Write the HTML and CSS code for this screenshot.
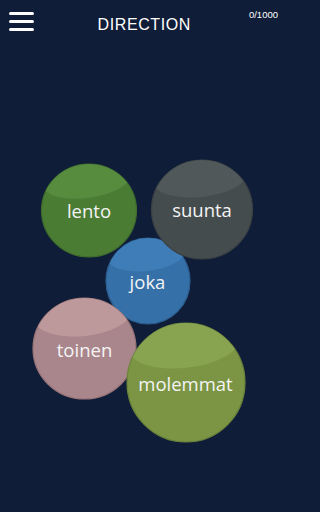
FILE: index.html
```html
<!DOCTYPE html>
<html>
<head>
<meta charset="utf-8">
<link rel="stylesheet" href="styles.css">
</head>
<body>
<div class="app">
  <header class="topbar">
    <div class="menu" aria-label="menu">
      <span class="bar"></span><span class="bar"></span><span class="bar"></span>
    </div>
    <h1 class="title">DIRECTION</h1>
    <div class="counter">0/1000</div>
  </header>
  <main class="stage">
    <svg class="bubbles" viewBox="0 48 288 464" width="288" height="464">
      <defs>
        <clipPath id="c-lento"><ellipse cx="89" cy="210.5" rx="47.5" ry="46.5"/></clipPath>
        <clipPath id="c-joka"><ellipse cx="148" cy="281" rx="42" ry="43"/></clipPath>
        <clipPath id="c-suunta"><ellipse cx="202" cy="209.5" rx="50.5" ry="49.5"/></clipPath>
        <clipPath id="c-toinen"><ellipse cx="84.5" cy="348.5" rx="51.5" ry="50.5"/></clipPath>
        <clipPath id="c-molemmat"><ellipse cx="186" cy="382.5" rx="59" ry="59.5"/></clipPath>
      </defs>

      <g class="bubble">
        <ellipse cx="89" cy="210.5" rx="47.5" ry="46.5" fill="#4a7c34" stroke="#3f6c2c" stroke-width="1.2"/>
        <g clip-path="url(#c-lento)">
          <ellipse cx="87" cy="179" rx="45" ry="19" fill="#5a9042" opacity="0.8" transform="rotate(-8 87 179)"/>
        </g>
        <text x="89" y="217.5" class="word">lento</text>
      </g>

      <g class="bubble">
        <ellipse cx="148" cy="281" rx="42" ry="43" fill="#3570a8" stroke="#2c5f90" stroke-width="1.2"/>
        <g clip-path="url(#c-joka)">
          <ellipse cx="146" cy="254" rx="40" ry="17" fill="#3f7fba" opacity="0.85" transform="rotate(-6 146 254)"/>
        </g>
        <text x="147.5" y="289" class="word">joka</text>
      </g>

      <g class="bubble">
        <ellipse cx="202" cy="209.5" rx="50.5" ry="49.5" fill="#454c4e" stroke="#3b4143" stroke-width="1.2"/>
        <g clip-path="url(#c-suunta)">
          <ellipse cx="200" cy="178" rx="47" ry="19" fill="#515a5c" opacity="0.9" transform="rotate(-6 200 178)"/>
        </g>
        <text x="202" y="217" class="word">suunta</text>
      </g>

      <g class="bubble">
        <ellipse cx="84.5" cy="348.5" rx="51.5" ry="50.5" fill="#a9868b" stroke="#987579" stroke-width="1.2"/>
        <g clip-path="url(#c-toinen)">
          <ellipse cx="83" cy="316" rx="48" ry="20" fill="#c29c9f" opacity="0.85" transform="rotate(-6 83 316)"/>
        </g>
        <text x="84.5" y="357" class="word">toinen</text>
      </g>

      <g class="bubble">
        <ellipse cx="186" cy="382.5" rx="59" ry="59.5" fill="#7b9544" stroke="#6b843a" stroke-width="1.2"/>
        <g clip-path="url(#c-molemmat)">
          <ellipse cx="184" cy="345" rx="55" ry="23" fill="#8aa553" opacity="0.9" transform="rotate(-6 184 345)"/>
        </g>
        <text x="185.5" y="390.5" class="word">molemmat</text>
      </g>
    </svg>
  </main>
</div>
</body>
</html>
```
FILE: styles.css
```css
html, body {
  margin: 0;
  padding: 0;
  background: #101d38;
}
.app {
  width: 288px;
  height: 512px;
  display: flex;
  flex-direction: column;
  background: #101d38;
  overflow: hidden;
}
.topbar {
  height: 48px;
  display: grid;
  grid-template-columns: 1fr auto 1fr;
  align-items: start;
  color: #ffffff;
  font-family: "Liberation Sans", Arial, sans-serif;
}
.menu {
  display: flex;
  flex-direction: column;
  gap: 5px;
  padding: 12px 0 0 9px;
  width: 25px;
}
.bar {
  display: block;
  height: 3px;
  width: 25px;
  border-radius: 2px;
  background: #ffffff;
}
.title {
  margin: 0;
  padding-top: 15px;
  font-size: 16px;
  line-height: 20px;
  font-weight: normal;
  letter-spacing: 0.6px;
  margin-right: -0.6px;
}
.counter {
  justify-self: end;
  padding: 10px 10px 0 0;
  font-size: 9.5px;
  line-height: 10px;
}
.stage {
  flex: 1;
  position: relative;
}
.bubbles {
  position: absolute;
  left: 0;
  top: 0;
  display: block;
}
.word {
  font-family: "Open Sans", "Noto Sans", sans-serif;
  font-size: 18.5px;
  fill: #f4f4f4;
  text-anchor: middle;
}
```
